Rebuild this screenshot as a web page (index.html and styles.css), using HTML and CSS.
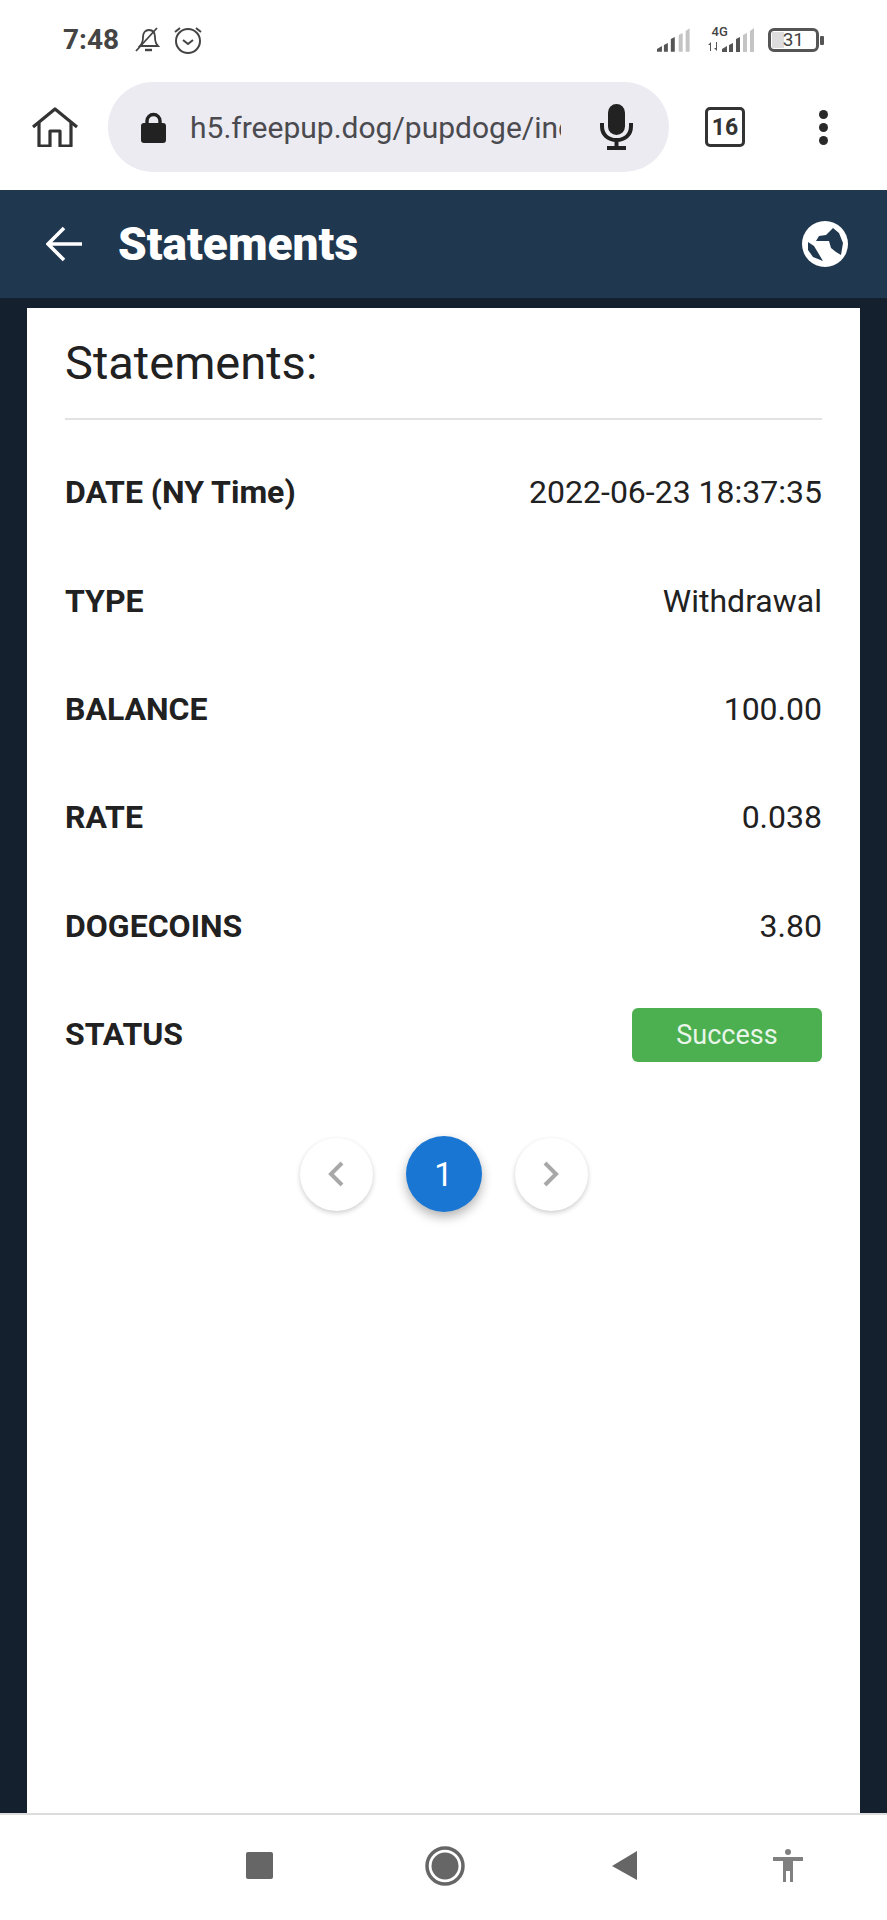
FILE: index.html
```html
<!DOCTYPE html>
<html lang="en">
<head>
    <meta charset="UTF-8">
    <meta name="viewport" content="width=device-width, initial-scale=1.0">
    <title>Statements</title>
    <link rel="stylesheet" href="styles.css">
</head>
<body>

    <!-- Status bar -->
    <div class="status-bar">
        <span class="time">7:48</span>
        <svg class="bell" viewBox="0 0 26 28" fill="none" stroke="#444" stroke-width="1.8">
            <path d="M5 20c2-2 3-4 3-9 0-4 2-7 6-7s6 3 6 7c0 5 1 7 3 9z"/>
            <path d="M10 24h7" stroke-width="2.4"/>
            <path d="M1 25L22 2"/>
        </svg>
        <svg class="alarm" viewBox="0 0 30 28" fill="none" stroke="#444" stroke-width="2">
            <circle cx="15" cy="15" r="12"/>
            <path d="M2 6l5-4M28 6l-5-4"/>
            <path d="M10 14l5 4 5-4"/>
        </svg>
        <div class="status-right">
            <svg class="signal" viewBox="0 0 34 24">
                <path fill="#555" d="M0 24v-3l5-3v6zM7 24v-7l4-2v9zM14 24V11l4-2v15z"/>
                <path fill="#c4c4c4" d="M22 24V7l4-2v19zM29 24V3l4-3v24z"/>
            </svg>
            <div class="signal-4g">
                <span class="label-4g">4G</span>
                <svg viewBox="0 0 47 24" class="signal-two">
                    <path fill="#555" d="M2 23v-6H0l3-3v9zM8 14v6H6l3 3h0v-9z"/>
                    <path fill="#555" d="M14 24v-3l5-3v6zM21 24v-7l4-2v9zM28 24V11l4-2v15z"/>
                    <path fill="#c4c4c4" d="M35 24V7l4-2v19zM42 24V3l4-3v24z"/>
                </svg>
            </div>
            <div class="battery"><span class="battery-fill"></span><span class="battery-num">31</span></div>
            <span class="battery-tip"></span>
        </div>
    </div>

    <!-- Browser toolbar -->
    <div class="toolbar">
        <svg class="home" viewBox="0 0 46 40" fill="none" stroke="#333" stroke-width="3.2" stroke-linejoin="round">
            <path d="M1 20L23 2l22 18"/>
            <path d="M7 16v23h11V24h10v15h11V16"/>
        </svg>
        <div class="url-pill">
            <svg class="lock" viewBox="0 0 25 31">
                <path fill="none" stroke="#222" stroke-width="3.4" d="M6 14V9a6.500 6.500 0 0 1 13 0v5"/>
                <rect x="0" y="11" width="25" height="20" rx="3" fill="#222"/>
            </svg>
            <span class="url-text">h5.freepup.dog/pupdoge/index</span>
            <svg class="mic" viewBox="0 0 33 46">
                <rect x="8" y="0" width="17" height="31" rx="8.500" fill="#222"/>
                <path d="M2 19v3c0 9 6 14 14.500 14S31 31 31 22v-3" fill="none" stroke="#222" stroke-width="4"/>
                <path d="M16.500 36v7M7 44h19" fill="none" stroke="#222" stroke-width="4"/>
            </svg>
        </div>
        <div class="tab-count">16</div>
        <div class="dots"><span></span><span></span><span></span></div>
    </div>

    <!-- Page header -->
    <header>
        <svg class="back" viewBox="0 0 36 36" fill="none" stroke="#fff" stroke-width="3.6">
            <path d="M36 18H3M18 2L2 18l16 16"/>
        </svg>
        <h1>Statements</h1>
        <svg class="globe" viewBox="0 0 46 46">
            <circle cx="23" cy="23" r="23" fill="#fff"/>
            <path fill="#20384f" d="M14 20l3-5 7-1 7-7 6 5 4 10-2 12-5-3-5-4-2-7zM6 21l6 4 9 15-10-4-5-7z"/>
        </svg>
    </header>

    <!-- Statement card -->
    <main>
        <div class="card">
            <h2>Statements:</h2>
            <div class="rows">
                <div class="row"><strong>DATE (NY Time)</strong><span>2022-06-23 18:37:35</span></div>
                <div class="row"><strong>TYPE</strong><span>Withdrawal</span></div>
                <div class="row"><strong>BALANCE</strong><span>100.00</span></div>
                <div class="row"><strong>RATE</strong><span>0.038</span></div>
                <div class="row"><strong>DOGECOINS</strong><span>3.80</span></div>
                <div class="row"><strong>STATUS</strong><span class="badge">Success</span></div>
            </div>
            <div class="pager">
                <div class="page-btn">
                    <svg viewBox="0 0 16 26" fill="none" stroke="#a8a8a8" stroke-width="4"><path d="M14 2L3 13l11 11"/></svg>
                </div>
                <div class="page-btn active">1</div>
                <div class="page-btn">
                    <svg viewBox="0 0 16 26" fill="none" stroke="#a8a8a8" stroke-width="4"><path d="M2 2l11 11L2 24"/></svg>
                </div>
            </div>
        </div>
    </main>

    <!-- Android navigation -->
    <div class="nav-bar">
        <span class="nav-square"></span>
        <svg class="nav-circle" viewBox="0 0 40 40">
            <circle cx="20" cy="20" r="18" fill="none" stroke="#666" stroke-width="3.500"/>
            <circle cx="20" cy="20" r="13.500" fill="#666"/>
        </svg>
        <svg class="nav-back" viewBox="0 0 25 29"><path fill="#666" d="M25 0v29L0 15z"/></svg>
        <svg class="nav-person" viewBox="0 0 30 33">
            <circle cx="15" cy="3" r="3" fill="#808080"/>
            <path fill="#808080" d="M0 8h30v4H20v21h-3V22h-4v11h-3V12H0z"/>
        </svg>
    </div>

</body>
</html>
```

FILE: styles.css
```css
* {
    box-sizing: border-box;
}
body {
    font-family: Roboto, "Liberation Sans", sans-serif;
    margin: 0;
    padding: 0;
    height: 1920px;
    display: flex;
    flex-direction: column;
    background-color: #14202e;
    color: #212121;
    overflow: hidden;
}

/* status bar */
.status-bar {
    height: 74px;
    flex: none;
    background-color: #fff;
    display: flex;
    align-items: center;
    padding: 5px 63px 0;
}
.time {
    font-size: 28px;
    font-weight: 700;
    color: #444;
    width: 72px;
}
.bell {
    width: 26px;
    height: 28px;
}
.alarm {
    width: 30px;
    height: 28px;
    margin-left: 12px;
}
.status-right {
    margin-left: auto;
    display: flex;
    align-items: flex-end;
    height: 24px;
    width: 167px;
}
.signal {
    width: 34px;
    height: 24px;
}
.signal-4g {
    position: relative;
    width: 47px;
    height: 24px;
    margin-left: 17px;
}
.label-4g {
    position: absolute;
    left: 4px;
    top: -3px;
    font-size: 13px;
    font-weight: 500;
    color: #444;
    line-height: 13px;
}
.signal-two {
    width: 47px;
    height: 24px;
    display: block;
}
.battery {
    width: 52px;
    height: 24px;
    margin-left: 13px;
    border: 3px solid #555;
    border-radius: 6px;
    position: relative;
    display: flex;
    align-items: center;
    justify-content: center;
}
.battery-fill {
    position: absolute;
    left: 1px;
    top: 1px;
    bottom: 1px;
    width: 12px;
    background-color: #ddd;
}
.battery-num {
    position: relative;
    font-size: 19px;
    color: #444;
}
.battery-tip {
    width: 4px;
    height: 9px;
    margin: 0 0 7px 1px;
    background-color: #555;
    border-radius: 1px;
}

/* browser toolbar */
.toolbar {
    height: 116px;
    flex: none;
    background-color: #fff;
    display: flex;
    align-items: center;
    padding-bottom: 10px;
}
.home {
    width: 46px;
    height: 40px;
    margin-left: 32px;
    flex: none;
}
.url-pill {
    width: 561px;
    height: 90px;
    margin-left: 30px;
    flex: none;
    background-color: #ecebf2;
    border-radius: 45px;
    display: flex;
    align-items: center;
    padding-left: 33px;
}
.lock {
    width: 25px;
    height: 31px;
    flex: none;
}
.url-text {
    margin-left: 24px;
    width: 371px;
    overflow: hidden;
    white-space: nowrap;
    font-size: 30px;
    color: #4a4a4f;
    flex: none;
}
.mic {
    width: 33px;
    height: 46px;
    margin-left: 39px;
    flex: none;
}
.tab-count {
    width: 40px;
    height: 40px;
    margin-left: 36px;
    flex: none;
    border: 3px solid #333;
    border-radius: 5px;
    font-size: 23px;
    font-weight: 700;
    color: #333;
    display: flex;
    align-items: center;
    justify-content: center;
}
.dots {
    margin-left: 74px;
    display: flex;
    flex-direction: column;
    gap: 4px;
}
.dots span {
    width: 9px;
    height: 9px;
    border-radius: 50%;
    background-color: #2a2a2a;
}

/* page header */
header {
    height: 108px;
    flex: none;
    background-color: #20384f;
    display: flex;
    align-items: center;
    color: #fff;
    padding: 0 39px 0 46px;
}
.back {
    width: 36px;
    height: 36px;
    flex: none;
}
header h1 {
    margin: 0 0 0 36px;
    font-size: 46px;
    font-weight: 900;
}
.globe {
    width: 46px;
    height: 46px;
    margin-left: auto;
}

/* card */
main {
    flex: 1;
    min-height: 0;
    padding: 10px 27px 0;
}
.card {
    height: 100%;
    background-color: #fff;
    padding: 0 38px;
}
.card h2 {
    margin: 0;
    height: 112px;
    border-bottom: 2px solid #e2e2e2;
    font-size: 47px;
    font-weight: 400;
    line-height: 110px;
}
.rows {
    padding-top: 19px;
}
.row {
    height: 108.400px;
    display: flex;
    align-items: center;
    justify-content: space-between;
    font-size: 32px;
}
.row strong {
    font-weight: 700;
    margin-bottom: 2px;
}
.row span {
    margin-bottom: 2px;
}
.row .badge {
    width: 190px;
    height: 54px;
    margin-bottom: 0;
    background-color: #4caf50;
    color: #e8f5e9;
    border-radius: 6px;
    font-size: 27px;
    display: flex;
    align-items: center;
    justify-content: center;
}

/* pagination */
.pager {
    margin-top: 47px;
    display: flex;
    justify-content: center;
    align-items: center;
    gap: 33px;
}
.page-btn {
    width: 73px;
    height: 73px;
    border-radius: 50%;
    background-color: #fff;
    box-shadow: 0 2px 5px rgba(0, 0, 0, 0.2);
    display: flex;
    align-items: center;
    justify-content: center;
}
.page-btn svg {
    width: 16px;
    height: 26px;
}
.page-btn.active {
    width: 76px;
    height: 76px;
    background-color: #1976d2;
    color: #fff;
    font-size: 33px;
    box-shadow: 0 5px 11px rgba(0, 0, 0, 0.3);
}

/* android nav */
.nav-bar {
    height: 107px;
    flex: none;
    background-color: #fff;
    border-top: 2px solid #dcdcdc;
    display: flex;
    align-items: center;
    gap: 147px;
    padding: 0 0 4px 246px;
}
.nav-square {
    width: 27px;
    height: 27px;
    border-radius: 2px;
    background-color: #666;
}
.nav-circle {
    width: 40px;
    height: 40px;
    margin-left: 5px;
}
.nav-back {
    width: 25px;
    height: 29px;
}
.nav-person {
    width: 30px;
    height: 33px;
    margin-left: -11px;
}
```
